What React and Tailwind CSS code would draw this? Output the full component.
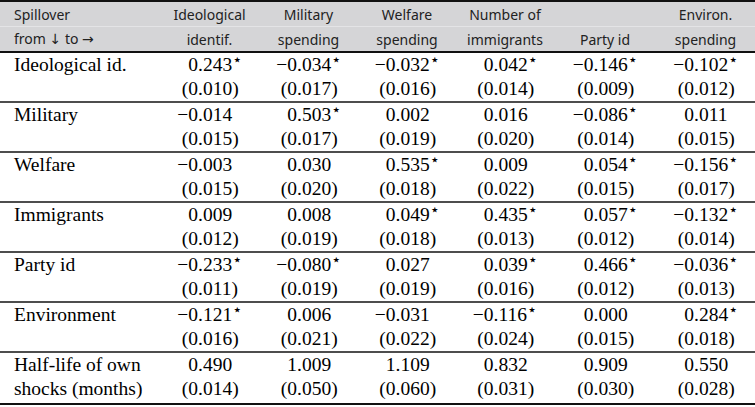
import React from "react";

const COLS = "grid grid-cols-[160px_99px_99px_98px_98px_102px_99px]";

const Arrow = ({ c }) => <span className="font-['DejaVu_Sans',sans-serif] text-[14px]">{c}</span>;

const HEAD1 = ["Spillover", "Ideological", "Military", "Welfare", "Number of", "", "Environ."];
const HEAD2 = [
  <>
    from <Arrow c="↓" /> to <Arrow c="→" />
  </>,
  "identif.",
  "spending",
  "spending",
  "immigrants",
  "Party id",
  "spending",
];

const ROWS = [
  ["Ideological id.", "", ["0.243*", "(0.010)"], ["−0.034*", "(0.017)"], ["−0.032*", "(0.016)"], ["0.042*", "(0.014)"], ["−0.146*", "(0.009)"], ["−0.102*", "(0.012)"]],
  ["Military", "", ["−0.014", "(0.015)"], ["0.503*", "(0.017)"], ["0.002", "(0.019)"], ["0.016", "(0.020)"], ["−0.086*", "(0.014)"], ["0.011", "(0.015)"]],
  ["Welfare", "", ["−0.003", "(0.015)"], ["0.030", "(0.020)"], ["0.535*", "(0.018)"], ["0.009", "(0.022)"], ["0.054*", "(0.015)"], ["−0.156*", "(0.017)"]],
  ["Immigrants", "", ["0.009", "(0.012)"], ["0.008", "(0.019)"], ["0.049*", "(0.018)"], ["0.435*", "(0.013)"], ["0.057*", "(0.012)"], ["−0.132*", "(0.014)"]],
  ["Party id", "", ["−0.233*", "(0.011)"], ["−0.080*", "(0.019)"], ["0.027", "(0.019)"], ["0.039*", "(0.016)"], ["0.466*", "(0.012)"], ["−0.036*", "(0.013)"]],
  ["Environment", "", ["−0.121*", "(0.016)"], ["0.006", "(0.021)"], ["−0.031", "(0.022)"], ["−0.116*", "(0.024)"], ["0.000", "(0.015)"], ["0.284*", "(0.018)"]],
  ["Half-life of own", "shocks (months)", ["0.490", "(0.014)"], ["1.009", "(0.050)"], ["1.109", "(0.060)"], ["0.832", "(0.031)"], ["0.909", "(0.030)"], ["0.550", "(0.028)"]],
];

function Num({ v }) {
  const star = v.endsWith("*");
  const s = star ? v.slice(0, -1) : v;
  const i = s.indexOf(".");
  return (
    <div className="flex h-6 items-center justify-center">
      <span className="w-[22px] text-right">{s.slice(0, i)}</span>
      <span className="w-[45px] whitespace-nowrap text-left">
        {s.slice(i)}
        {star && (
          <span className="relative -top-[6px] font-['DejaVu_Sans',sans-serif] text-[16px] leading-none">⋆</span>
        )}
      </span>
    </div>
  );
}

function HeadRow({ cells }) {
  return (
    <div className={`${COLS} h-6 items-center`}>
      {cells.map((c, i) => (
        <div key={i} className={i === 0 ? "pl-[14px] whitespace-nowrap" : "text-center"}>
          {c}
        </div>
      ))}
    </div>
  );
}

export default function App() {
  return (
    <div className="h-[407px] w-[755px] overflow-hidden bg-white">
      {/* header */}
      <div className="border-y-2 border-[#111] bg-[#d5d5d7] font-['Noto_Sans',sans-serif] text-[14px] text-[#222]">
        <HeadRow cells={HEAD1} />
        <div className="h-px bg-[#e4e4e6]" />
        <HeadRow cells={HEAD2} />
      </div>

      {/* body */}
      <div className="font-['Liberation_Serif',serif] text-[19.5px] leading-6 text-black">
        {ROWS.map((r, ri) => {
          const last = ri === ROWS.length - 1;
          return (
            <div
              key={ri}
              className={`${COLS} border-b-2 ${last ? "border-[#111] pb-[2px]" : "border-[#4d4d4d]"}`}
            >
              <div className="pl-[14px] whitespace-nowrap">
                <div className="h-6">{r[0]}</div>
                <div className="h-6">{r[1]}</div>
              </div>
              {r.slice(2).map((c, ci) => (
                <div key={ci}>
                  <Num v={c[0]} />
                  <Num v={c[1]} />
                </div>
              ))}
            </div>
          );
        })}
      </div>
    </div>
  );
}
